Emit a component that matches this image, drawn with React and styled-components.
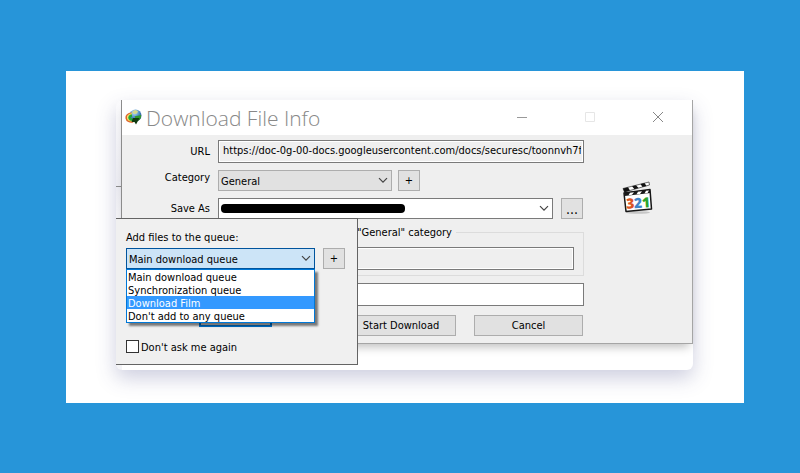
import React from "react";
import styled, { createGlobalStyle, css } from "styled-components";

const GlobalStyle = createGlobalStyle`
  *, *::before, *::after { box-sizing: border-box; }
  body {
    margin: 0;
    background: #2795d9;
    color: #000;
    font: 11px/14px "DejaVu Sans Condensed", Tahoma, sans-serif;
  }
  input, button, select { font: inherit; color: inherit; margin: 0; }
`;

const Page = styled.main`
  display: flex;
  min-height: 100vh;
  padding: 71px 56px 70px 66px;
`;

const Sheet = styled.div`
  flex: 1;
  background: #fff;
  padding: 29px 51px 33px 50px;
`;

const Card = styled.div`
  position: relative;
  padding: 0 0 26px 5px;
  border-radius: 6px;
  background: linear-gradient(#fafafc, #ececf2 86px, #8c8c8c 86px, #8c8c8c 87px, #ececf2 87px, #f4f4f7 120px) left / 6px 100% no-repeat, #fff;
  box-shadow: 0 8px 20px rgba(60, 66, 130, 0.26);
`;

const Dialog = styled.section`
  border: solid #a5a5a5;
  border-width: 0 1px 1px;
  border-left-color: #8c8c8c;
  background: #efefef;
  box-shadow: 0 7px 9px -4px rgba(0, 0, 0, 0.25);
`;

const TitleBar = styled.header`
  display: flex;
  align-items: center;
  height: 35px;
  padding: 0 27px 0 3px;
  background: #fff;
`;

const Title = styled.h1`
  flex: 1;
  margin: 0 0 0 4px;
  color: #888;
  font: 300 21px/30px "Open Sans", "Noto Sans", sans-serif;
`;

const WindowButtons = styled.div`
  display: flex;
  gap: 54px;
`;

const WindowButton = styled.button`
  display: grid;
  width: 14px;
  height: 14px;
  padding: 0;
  border: 0;
  background: none;
`;

const Body = styled.div`
  display: grid;
  grid-template-columns: 1fr 32px;
  gap: 38px;
  padding: 5px 38px 7px 0;
`;

const Form = styled.form`
  display: flex;
  flex-direction: column;
  gap: 7px;
`;

const Row = styled.div`
  display: grid;
  grid-template-columns: 88px 1fr;
  column-gap: 8px;
  align-items: ${(p) => (p.$align || "center")};
`;

const RowLabel = styled.label`
  padding-top: 1px;
  text-align: right;
`;

const Line = styled.div`
  display: flex;
  align-items: center;
  gap: ${(p) => p.$gap || 8}px;
  padding-right: ${(p) => p.$end || 0}px;
`;

const TextBox = styled.input`
  display: block;
  width: 100%;
  height: 23px;
  padding: 0 2px 2px 4px;
  border: 1px solid #7a7a7a;
  border-radius: 0;
  background: ${(p) => (p.readOnly ? "#efefef" : "#fff")};
  box-shadow: ${(p) => (p.readOnly ? "inset 0 0 0 1px #fff" : "none")};
  outline: 0;
`;

const Button = styled.button`
  height: 21px;
  width: ${(p) => p.$width || 22}px;
  padding: 1px 0 0;
  border: 1px solid #adadad;
  background: #e1e1e1;
  font-size: ${(p) => (p.$large ? 14 : 11)}px;
  line-height: 18px;
  text-align: center;
`;

const Combo = styled.div`
  position: relative;
  flex: ${(p) => (p.$width ? `0 0 ${p.$width}px` : 1)};
  svg { position: absolute; right: 4px; top: 7px; pointer-events: none; }
`;

const tones = {
  plain: css`border-color: #7a7a7a; background: #fff;`,
  grey: css`border-color: #adadad; background: #e1e1e1;`,
  open: css`border-color: #00549d; background: #cce4f7;`,
};

const Select = styled.select`
  display: block;
  width: 100%;
  height: 21px;
  padding: 2px 18px 0 2px;
  border: 1px solid;
  border-radius: 0;
  appearance: none;
  outline: 0;
  ${(p) => tones[p.$tone]}
`;

const Redaction = styled.span`
  position: absolute;
  left: 3px;
  top: 6px;
  width: 184px;
  height: 9px;
  border-radius: 4px;
  background: #000;
`;

const Group = styled.fieldset`
  min-width: 0;
  margin: 0 0 0 8px;
  padding: 9px 9px 5px;
  border: 1px solid #dcdcdc;
`;

const Legend = styled.legend`
  margin-left: 217px;
  padding: 1px 4px 0 0;
  line-height: 11px;
`;

const Actions = styled.div`
  display: flex;
  justify-content: flex-end;
  gap: 18px;
  padding: 2px 1px 0 0;
`;

const AppIcon = styled.div`
  padding-top: 41px;
`;

const QueuePanel = styled.section`
  position: absolute;
  left: 0;
  top: 118px;
  width: 242px;
  padding: 12px 12px 9px 10px;
  border: solid #646464;
  border-width: 1px 1px 1px 0;
  background: #f0f0f0;
`;

const QueueLabel = styled.label`
  display: block;
  margin-bottom: 3px;
`;

const OptionList = styled.ul`
  position: absolute;
  z-index: 1;
  left: 0;
  right: 0;
  top: 21px;
  margin: 0;
  padding: 0;
  list-style: none;
  border: 1px solid #0078d7;
  background: #fff;
  box-shadow: 3px 3px 2px rgba(0, 0, 0, 0.5);
`;

const Option = styled.li`
  padding: 2px 0 0 1px;
  line-height: 11px;
  color: ${(p) => (p["aria-selected"] ? "#fff" : "#000")};
  background: ${(p) => (p["aria-selected"] ? "#3399ff" : "transparent")};
`;

const OkButton = styled(Button)`
  display: block;
  height: 23px;
  margin: 35px 0 13px 73px;
  border: 2px solid #0078d7;
`;

const Check = styled.label`
  display: flex;
  align-items: flex-start;
  gap: 2px;
  line-height: 15px;
  input {
    appearance: none;
    width: 13px;
    height: 13px;
    border: 1px solid #333;
    background: #fff;
  }
`;

const Chevron = () => (
  <svg width="10" height="7" viewBox="0 0 10 7" fill="none" stroke="#444" strokeWidth="1.2">
    <path d="M1 1.2 5 5.2 9 1.2" />
  </svg>
);

const GlobeIcon = () => (
  <svg width="17" height="17" viewBox="0 0 17 17">
    <defs>
      <radialGradient id="sea" cx=".4" cy=".25" r=".8">
        <stop offset="0" stopColor="#c3e2f6" />
        <stop offset=".5" stopColor="#4f8fc9" />
        <stop offset="1" stopColor="#153a72" />
      </radialGradient>
    </defs>
    <circle cx="10.5" cy="6.5" r="6" fill="url(#sea)" />
    <path d="M7 3 10 1l3 1-1 2.5-3 .5z" fill="#d5d98a" />
    <path d="M9.5 7.5c2-1 4-.5 6.5-1.5.3 3-1.4 5.6-4 6z" fill="#2f9a28" />
    <path d="M6.5 4C3 4.5.8 6.5 1.2 9c.5 3 3.5 4.5 7 3.8" fill="none" stroke="#e0662c" strokeWidth="1.6" />
    <path d="M7 5C4 5.5 2.4 7 2.8 9c.5 2 3 3 6 2.5" fill="none" stroke="#f4e04f" strokeWidth="1.4" />
    <path d="M7 6.5C5 6.8 4 8 4.5 9c.6 1.7 3 2 5 1.5" fill="none" stroke="#22a838" strokeWidth="2.4" />
    <path d="M8 9l6.5 0-1 2-2.5 4.5-1.5-2.5-3 0z" fill="#103a10" />
  </svg>
);

const ClapperIcon = () => (
  <svg width="32" height="34" viewBox="0 0 32 34">
    <ellipse cx="16" cy="31.5" rx="12" ry="1.3" fill="#aaa" opacity=".6" />
    <path d="M1 7.5 27 1l.5 3L2.5 11z" fill="#fff" stroke="#333" strokeWidth=".7" />
    <path d="M1 7.5l5-1.3 2 3.3-5.5 1.8zM10 5.2l4-1 2.5 2.9-4 1.2zM18.5 3.1l4-1 2 2.8-4 1.2z" fill="#111" />
    <path d="M2 12 28 8.5l1.5 19.5L4 30.5z" fill="#fff" stroke="#161616" strokeWidth="1.5" strokeLinejoin="round" />
    <path d="M2 11.5 28 8.5l.3 3.5L2.6 15z" fill="#181818" />
    <path d="M8 11.7l4-.5-2 2.6-3.5.4zM16 10.7l4-.4-2 2.6-3.5.4zM24 9.8l3-.3-1.5 2.5-3 .4z" fill="#fff" />
    <g fontFamily="Open Sans, sans-serif" fontWeight="800" fontSize="14" transform="rotate(-4 16 22)">
      <text x="4" y="27" fill="#dc5322">3</text>
      <text x="12" y="27" fill="#3e85ca">2</text>
      <text x="20" y="27" fill="#2ba52d">1</text>
    </g>
  </svg>
);

const queues = ["Main download queue", "Synchronization queue", "Download Film", "Don't add to any queue"];

export default function App() {
  return (
    <>
      <GlobalStyle />
      <Page>
        <Sheet>
          <Card>
            <Dialog aria-labelledby="title">
              <TitleBar>
                <GlobeIcon />
                <Title id="title">Download File Info</Title>
                <WindowButtons>
                  <WindowButton aria-label="Minimize">
                    <svg width="14" height="14" stroke="#999"><path d="M2 6.5h10" /></svg>
                  </WindowButton>
                  <WindowButton aria-label="Maximize" disabled>
                    <svg width="14" height="14" fill="none" stroke="#e6e6e6"><path d="M2.5 1.5h9v9h-9z" /></svg>
                  </WindowButton>
                  <WindowButton aria-label="Close">
                    <svg width="14" height="14" stroke="#888"><path d="M2 1l10 10M12 1 2 11" /></svg>
                  </WindowButton>
                </WindowButtons>
              </TitleBar>
              <Body>
                <Form onSubmit={(e) => e.preventDefault()}>
                  <Row>
                    <RowLabel htmlFor="url">URL</RowLabel>
                    <TextBox
                      id="url"
                      readOnly
                      defaultValue="https://doc-0g-00-docs.googleusercontent.com/docs/securesc/toonnvh7fc"
                    />
                  </Row>
                  <Row $align="start">
                    <RowLabel htmlFor="category">Category</RowLabel>
                    <Line $gap={6}>
                      <Combo $width={174}>
                        <Select id="category" $tone="grey"><option>General</option></Select>
                        <Chevron />
                      </Combo>
                      <Button type="button" aria-label="Add category">+</Button>
                    </Line>
                  </Row>
                  <Row>
                    <RowLabel htmlFor="save">Save As</RowLabel>
                    <Line $end={1}>
                      <Combo>
                        <Select id="save" $tone="plain" />
                        <Redaction />
                        <Chevron />
                      </Combo>
                      <Button type="button" $large aria-label="Browse">...</Button>
                    </Line>
                  </Row>
                  <Group>
                    <Legend>"General" category</Legend>
                    <TextBox aria-label="Category path" readOnly />
                  </Group>
                  <Row>
                    <span />
                    <TextBox aria-label="Description" />
                  </Row>
                  <Actions>
                    <Button type="button" $width={110}>Start Download</Button>
                    <Button type="button" $width={109}>Cancel</Button>
                  </Actions>
                </Form>
                <AppIcon><ClapperIcon /></AppIcon>
              </Body>
            </Dialog>
            <QueuePanel>
              <QueueLabel htmlFor="queue">Add files to the queue:</QueueLabel>
              <Line>
                <Combo>
                  <Select id="queue" $tone="open">
                    {queues.map((q) => <option key={q}>{q}</option>)}
                  </Select>
                  <Chevron />
                  <OptionList role="listbox" aria-label="Queues">
                    {queues.map((q) => (
                      <Option key={q} role="option" aria-selected={q === "Download Film"}>{q}</Option>
                    ))}
                  </OptionList>
                </Combo>
                <Button type="button" aria-label="Add queue">+</Button>
              </Line>
              <OkButton type="button" $width={73} aria-label="OK" />
              <Check><input type="checkbox" />Don't ask me again</Check>
            </QueuePanel>
          </Card>
        </Sheet>
      </Page>
    </>
  );
}
